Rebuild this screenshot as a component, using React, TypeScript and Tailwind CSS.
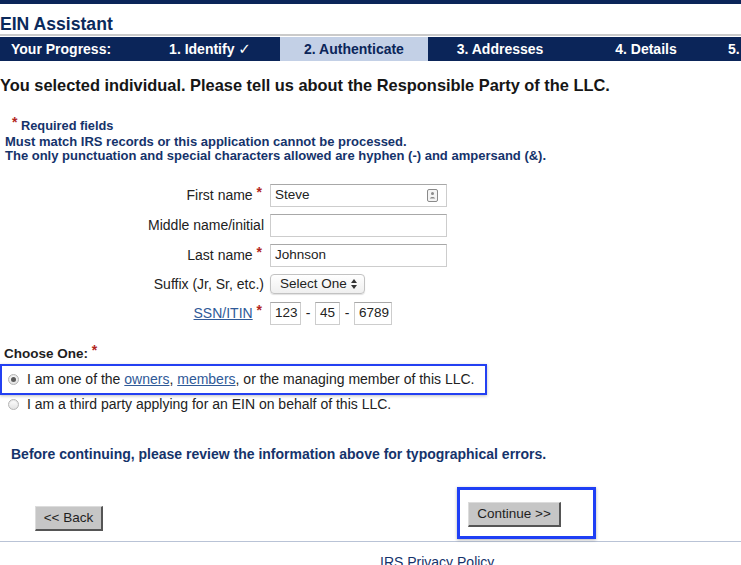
import React from "react";

const Star = () => <span className="text-[#b3261e] font-bold text-[14px] relative top-[-3px]">*</span>;

function Radio({ checked }: { checked?: boolean }) {
  return (
    <span className="inline-flex items-center justify-center w-[11px] h-[11px] rounded-full border border-[#b5b5b5] bg-[linear-gradient(#ffffff,#e2e2e2)] shadow-[inset_0_1px_1px_rgba(0,0,0,0.1)]">
      {checked && <span className="w-[5px] h-[5px] rounded-full bg-[#5a5a5a]" />}
    </span>
  );
}

function Input({ w, value, icon }: { w: string; value?: string; icon?: boolean }) {
  return (
    <div className={`${w} h-[23px] border border-[#cdcdcd] border-t-[#a8a8a8] bg-white flex items-center px-[4px] text-[13.5px] text-[#222] relative`}>
      <span>{value}</span>
      {icon && (
        <svg className="absolute right-[8px] top-[4px]" width="11" height="13" viewBox="0 0 11 13">
          <rect x="0.5" y="0.5" width="10" height="12" rx="1.5" fill="#f4f4f4" stroke="#8a8a8a" />
          <circle cx="5.5" cy="4.6" r="1.5" fill="#8a8a8a" />
          <path d="M2.8 9.5 C3.2 7.4 7.8 7.4 8.2 9.5 Z" fill="#8a8a8a" />
        </svg>
      )}
    </div>
  );
}

export default function App() {
  return (
    <div className="w-[741px] h-[565px] overflow-hidden bg-white font-['Liberation_Sans',Arial,sans-serif]">
      <div className="h-[4px] bg-[#0b2559]" />
      <div className="h-[30px] pt-[11px] text-[17.6px] leading-[19px] font-bold text-[#0b2a5c]">EIN Assistant</div>
      <div className="h-[2px] bg-[#cacaca]" />
      <div className="h-[24px] mt-[1px] bg-[#0b2559] flex items-center text-[14px] font-bold text-white whitespace-nowrap">
        <div className="w-[140px] pl-[11px]">Your Progress:</div>
        <div className="w-[140px] text-center">1. Identify <span className="font-['DejaVu_Sans'] font-bold text-[15px]">✓</span></div>
        <div className="w-[148px] h-full bg-[#c3d0e6] text-[#0b2559] flex items-center justify-center">2. Authenticate</div>
        <div className="w-[144px] text-center">3. Addresses</div>
        <div className="w-[148px] text-center">4. Details</div>
        <div className="pl-[8px]">5.</div>
      </div>

      <div className="mt-[15px] text-[16.4px] leading-[19px] font-bold text-[#161616] whitespace-nowrap">
        You selected individual. Please tell us about the Responsible Party of the LLC.
      </div>

      <div className="mt-[23px] pl-[12px] text-[12.8px] leading-[14px] font-bold text-[#15336b]">
        <Star /> Required fields
      </div>
      <div className="mt-[2px] pl-[5px] text-[13px] leading-[14px] font-bold text-[#15336b] whitespace-nowrap">
        <div>Must match IRS records or this application cannot be processed.</div>
        <div>The only punctuation and special characters allowed are hyphen (-) and ampersand (&amp;).</div>
      </div>

      <div className="mt-[17px] text-[14px] text-[#222]">
        <div className="h-[30px] flex items-center">
          <div className="w-[264px] text-right pr-[2px]">First name <Star /></div>
          <div className="ml-[6px]"><Input w="w-[177px]" value="Steve" icon /></div>
        </div>
        <div className="h-[30px] flex items-center">
          <div className="w-[264px] text-right">Middle name/initial</div>
          <div className="ml-[6px]"><Input w="w-[177px]" /></div>
        </div>
        <div className="h-[30px] flex items-center">
          <div className="w-[264px] text-right pr-[2px]">Last name <Star /></div>
          <div className="ml-[6px]"><Input w="w-[177px]" value="Johnson" /></div>
        </div>
        <div className="h-[28px] flex items-center">
          <div className="w-[264px] text-right">Suffix (Jr, Sr, etc.)</div>
          <div className="ml-[6px] w-[95px] h-[20px] rounded-[4px] border border-[#c2c2c2] bg-[linear-gradient(#ffffff,#efefef)] shadow-[0_1px_1px_rgba(0,0,0,0.12)] flex items-center pl-[9px] text-[13.5px] text-[#222]">
            Select One
            <svg className="ml-[4px]" width="6" height="10" viewBox="0 0 6 10">
              <path d="M0 4 L3 0 L6 4 Z M0 6 L3 10 L6 6 Z" fill="#333" />
            </svg>
          </div>
        </div>
        <div className="h-[31px] flex items-center">
          <div className="w-[264px] text-right pr-[2px]">
            <span className="text-[#2f5a98] underline">SSN/ITIN</span> <Star />
          </div>
          <div className="ml-[6px] flex items-center">
            <Input w="w-[31px]" value="123" />
            <span className="w-[14px] text-center">-</span>
            <Input w="w-[25px]" value="45" />
            <span className="w-[14px] text-center">-</span>
            <Input w="w-[38px]" value="6789" />
          </div>
        </div>
      </div>

      <div className="mt-[16px] pl-[4px] text-[13.5px] leading-[16px] font-bold text-[#1e1e1e]">
        Choose One: <Star />
      </div>
      <div className="mt-[2px] w-[487px] h-[31px] border-2 border-[#2340f2] shadow-[0_1px_3px_rgba(0,0,0,0.25)] flex items-center pl-[6px] text-[14px] text-[#222] whitespace-nowrap">
        <Radio checked />
        <span className="ml-[8px]">
          I am one of the <span className="text-[#2f5a98] underline">owners</span>, <span className="text-[#2f5a98] underline">members</span>, or the managing member of this LLC.
        </span>
      </div>
      <div className="h-[18px] flex items-center pl-[8px] text-[14px] text-[#222] whitespace-nowrap">
        <Radio />
        <span className="ml-[8px]">I am a third party applying for an EIN on behalf of this LLC.</span>
      </div>

      <div className="mt-[33px] pl-[11px] text-[14px] leading-[16px] font-bold text-[#15336b] whitespace-nowrap">
        Before continuing, please review the information above for typographical errors.
      </div>

      <div className="mt-[25px] flex items-start">
        <button className="ml-[35px] mt-[19px] w-[68px] h-[25px] bg-[#c6c6c6] border border-[#dcdcdc] border-r-[#555] border-b-[#555] border-r-2 border-b-2 text-[13.5px] text-[#1e1e1e] flex items-center justify-center">
          &lt;&lt; Back
        </button>
        <div className="ml-[354px] w-[139px] h-[52px] border-[3px] border-[#1f3ff5] shadow-[0_1px_3px_rgba(0,0,0,0.3)] pl-[8px] pt-[12px]">
          <button className="w-[93px] h-[25px] bg-[#c6c6c6] border border-[#dcdcdc] border-r-[#555] border-b-[#555] border-r-2 border-b-2 text-[13.5px] text-[#1e1e1e] flex items-center justify-center">
            Continue &gt;&gt;
          </button>
        </div>
      </div>
      <div className="mt-[2px] h-[1px] bg-[#b9c3d6]" />
      <div className="mt-[12px] pl-[380px] text-[14px] leading-[16px] text-[#15336b]">IRS Privacy Policy</div>
    </div>
  );
}
